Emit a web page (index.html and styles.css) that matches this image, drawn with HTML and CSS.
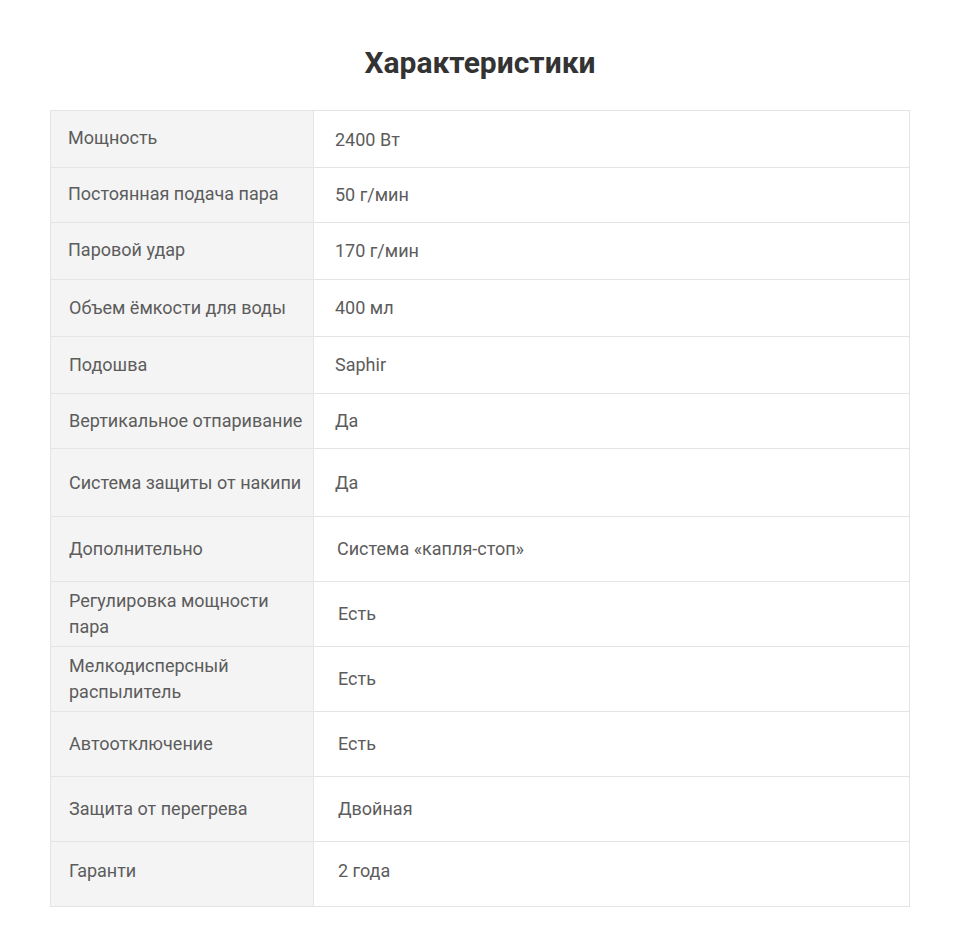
FILE: index.html
```html
<!DOCTYPE html>
<html lang="ru">
<head>
<meta charset="utf-8">
<link rel="stylesheet" href="styles.css">
</head>
<body>
<div class="page">
  <h1 class="title">Характеристики</h1>
  <div class="specs">
    <div class="row h57"><div class="key">Мощность</div><div class="val up">2400 Вт</div></div>
    <div class="row h55"><div class="key">Постоянная подача пара</div><div class="val">50 г/мин</div></div>
    <div class="row h57"><div class="key">Паровой удар</div><div class="val">170 г/мин</div></div>
    <div class="row h57"><div class="key k2">Объем ёмкости для воды</div><div class="val">400 мл</div></div>
    <div class="row h57"><div class="key k2">Подошва</div><div class="val">Saphir</div></div>
    <div class="row h55"><div class="key k2">Вертикальное отпаривание</div><div class="val">Да</div></div>
    <div class="row h68"><div class="key k2">Система защиты от накипи</div><div class="val">Да</div></div>
    <div class="row h65"><div class="key k2">Дополнительно</div><div class="val v2">Система «капля-стоп»</div></div>
    <div class="row h65"><div class="key k2">Регулировка мощности пара</div><div class="val v3">Есть</div></div>
    <div class="row h65"><div class="key k2">Мелкодисперсный распылитель</div><div class="val v3">Есть</div></div>
    <div class="row h65"><div class="key k2">Автоотключение</div><div class="val v3">Есть</div></div>
    <div class="row h65"><div class="key k2">Защита от перегрева</div><div class="val v3">Двойная</div></div>
    <div class="row h65 last"><div class="key k2">Гаранти</div><div class="val v3">2 года</div></div>
  </div>
</div>
</body>
</html>
```
FILE: styles.css
```css
html, body {
  margin: 0;
  padding: 0;
  background: #ffffff;
}
body {
  font-family: Roboto, "Liberation Sans", Arial, sans-serif;
  color: #5c5c5c;
}
.page {
  width: 860px;
  margin: 0 0 0 50px;
  padding-top: 43px;
}
.title {
  margin: 0 0 27px 0;
  font-size: 30px;
  line-height: 40px;
  font-weight: 700;
  color: #333333;
  text-align: center;
}
.specs {
  border: 1px solid #e4e4e4;
  border-bottom: none;
}
.row {
  display: flex;
  box-sizing: border-box;
  border-bottom: 1px solid #e4e4e4;
}
.h55 { height: 55px; }
.h57 { height: 57px; }
.h65 { height: 65px; }
.h68 { height: 68px; }
.key {
  width: 263px;
  flex: none;
  box-sizing: border-box;
  background: #f4f4f4;
  border-right: 1px solid #e4e4e4;
  padding: 0 8px 2px 17px;
  display: flex;
  align-items: center;
  font-size: 18px;
  line-height: 26px;
}
.key.k2 { padding-left: 18px; padding-bottom: 0; }
.val {
  flex: 1;
  padding-left: 21px;
  display: flex;
  align-items: center;
  font-size: 18px;
  line-height: 26px;
}
.val.up { padding-top: 2px; }
.val.v2 { padding-left: 23px; }
.val.v3 { padding-left: 24px; padding-bottom: 0; }
.row.last .key,
.row.last .val { padding-bottom: 6px; }
```
